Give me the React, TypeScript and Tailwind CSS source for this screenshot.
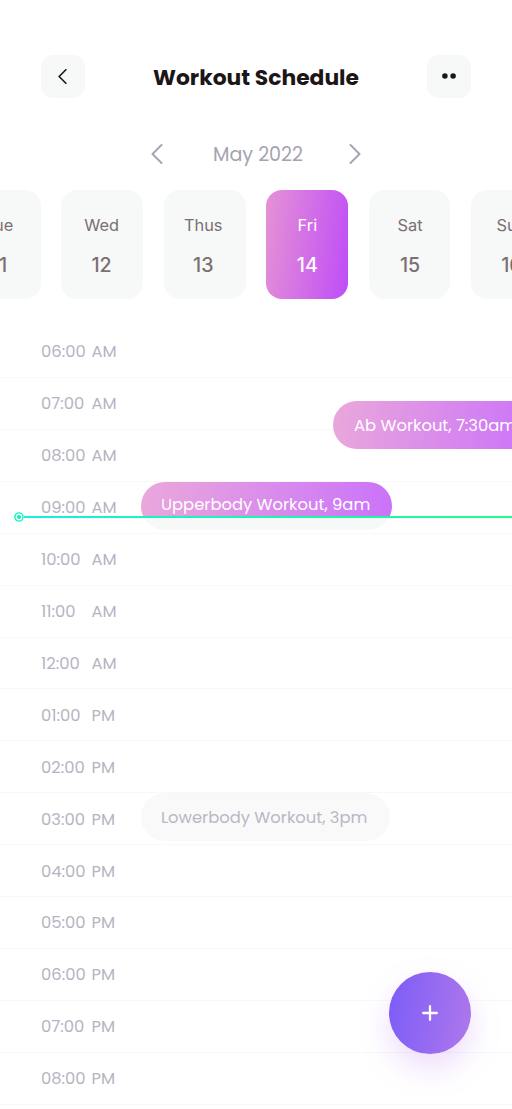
import React from "react";

const days = [
  { name: "Tue", date: "11", inset: "pr-[2px]" },
  { name: "Wed", date: "12", inset: "pr-[1.5px]" },
  { name: "Thus", date: "13", inset: "pr-[3px]" },
  { name: "Fri", date: "14", inset: "pl-[0.5px]", active: true },
  { name: "Sat", date: "15", inset: "pl-[1px]" },
  { name: "Sun", date: "16", inset: "pr-[1px]" },
];

const hours = [
  "06:00 AM",
  "07:00 AM",
  "08:00 AM",
  "09:00 AM",
  "10:00 AM",
  "11:00 AM",
  "12:00 AM",
  "01:00 PM",
  "02:00 PM",
  "03:00 PM",
  "04:00 PM",
  "05:00 PM",
  "06:00 PM",
  "07:00 PM",
  "08:00 PM",
];

function Chevron({ right = false, className }: { right?: boolean; className: string }) {
  return (
    <svg viewBox="0 0 12 20" fill="none" stroke="currentColor" strokeLinecap="round" strokeLinejoin="round" className={className}>
      <path d={right ? "M1.5 1 10.5 10 1.5 19" : "M10.5 1 1.5 10 10.5 19"} />
    </svg>
  );
}

function Header() {
  return (
    <header className="flex items-center justify-between px-[41px] pt-[54.6px]">
      <button aria-label="Back" className="flex h-[43.5px] w-[43.5px] items-center justify-center rounded-[12px] bg-[#f7f8f8] text-[#1d1617]">
        <Chevron className="h-[15px] w-[9px] stroke-[2.2]" />
      </button>
      <h1 className="whitespace-nowrap pt-[3px] text-[21.84px] font-bold leading-8 text-[#1d1617]">Workout Schedule</h1>
      <button aria-label="More" className="flex h-[43.5px] w-[43.5px] items-center justify-center rounded-[12px] bg-[#f7f8f8] text-[#1d1617]">
        <svg viewBox="0 0 14 6" className="h-[6px] w-[14px]" fill="currentColor">
          <circle cx="2.9" cy="3" r="2.75" />
          <circle cx="11.1" cy="3" r="2.75" />
        </svg>
      </button>
    </header>
  );
}

function MonthPicker() {
  return (
    <div className="mx-auto mt-[41px] flex h-[30px] w-[210px] items-center justify-between text-[#a5a3b0]">
      <Chevron className="h-5 w-3 stroke-[1.9]" />
      <span className="whitespace-nowrap pl-[4px] pt-[2px] text-[19.1px] leading-[30px]">May 2022</span>
      <Chevron right className="h-5 w-3 stroke-[1.9]" />
    </div>
  );
}

function DayStrip() {
  return (
    <div className="mt-[21px] h-[109px] w-full overflow-hidden font-['Inter',sans-serif]">
      <div className="-ml-[41px] flex gap-[20.5px]">
        {days.map((day) => (
          <div
            key={day.date}
            className={
              (day.active
                ? "flex h-[109px] w-[81.9px] shrink-0 flex-col items-center rounded-[16px] bg-[linear-gradient(97deg,#e692d5_0%,#c050f6_96%)] pt-[23px] text-white "
                : "flex h-[109px] w-[81.9px] shrink-0 flex-col items-center rounded-[16px] bg-[#f7f8f8] pt-[23px] text-[#7b6f72] ") + day.inset
            }
          >
            <span className="text-[16.38px] leading-[25px]">{day.name}</span>
            <span className="mt-[13px] text-[19.6px] font-medium leading-[28px]">{day.date}</span>
          </div>
        ))}
      </div>
    </div>
  );
}

function Schedule() {
  return (
    <main className="relative mt-[27px] w-full">
      {hours.map((hour) => (
        <div key={hour} className="flex h-[51.92px] items-center border-b border-[#f8f8f8] pl-[41px] pt-[2.4px] text-[16.38px] text-[#b6b4c2]">
          <span className="w-[50.5px]">{hour.slice(0, 5)}</span>
          <span>{hour.slice(6)}</span>
        </div>
      ))}

      <div className="absolute left-[333px] top-[75px] flex h-[47.8px] w-[226px] items-center rounded-full bg-[linear-gradient(100deg,#eaa8db_0%,#ca72fa_90%)] pl-[21px] pt-[2px] text-[16.38px] text-white">
        <span className="whitespace-nowrap">Ab Workout, 7:30am</span>
      </div>

      <div className="absolute left-[141px] top-[156px] h-[47.8px] w-[251px] overflow-hidden rounded-full bg-[#f7f8f8] text-[16.38px] text-white">
        <div className="h-[34.5px] bg-[linear-gradient(100deg,#eaa8db_0%,#ca72fa_100%)] pl-[20px] leading-[46px]">
          <span className="whitespace-nowrap">Upperbody Workout, 9am</span>
        </div>
      </div>

      <div className="absolute left-[141px] top-[467px] flex h-[47.8px] w-[248.5px] items-center rounded-full bg-[#f9f9f9] pl-[20px] pt-[2.5px] text-[16.38px] text-[#b9b7c5]">
        <span className="whitespace-nowrap">Lowerbody Workout, 3pm</span>
      </div>

      <div className="absolute left-[13.5px] right-0 top-[186px] flex h-[10px] items-center">
        <svg viewBox="0 0 10 10" className="h-[10px] w-[10px] shrink-0" fill="none">
          <circle cx="5" cy="5" r="4.1" stroke="#10f5bf" strokeWidth="1.4" />
          <circle cx="5" cy="5" r="2.1" fill="#10f5a8" />
        </svg>
        <span className="h-[2px] flex-1 bg-[linear-gradient(90deg,#18efdc,#20fb89)]" />
      </div>
    </main>
  );
}

export default function App() {
  return (
    <div className="relative h-[1109px] w-[512px] overflow-hidden bg-white font-['Poppins','Inter',sans-serif]">
      <Header />
      <MonthPicker />
      <DayStrip />
      <Schedule />
      <button aria-label="Add workout" className="absolute left-[389px] top-[972px] flex h-[82px] w-[82px] items-center justify-center rounded-full bg-[linear-gradient(98deg,#7c5cf7_0%,#ae78ec_100%)] text-white shadow-[0_14px_30px_rgba(197,139,242,0.3)]">
        <svg viewBox="0 0 16 16" className="h-4 w-4" fill="none" stroke="currentColor" strokeWidth="2.3" strokeLinecap="round">
          <path d="M8 1.2v13.6M1.2 8h13.6" />
        </svg>
      </button>
    </div>
  );
}
